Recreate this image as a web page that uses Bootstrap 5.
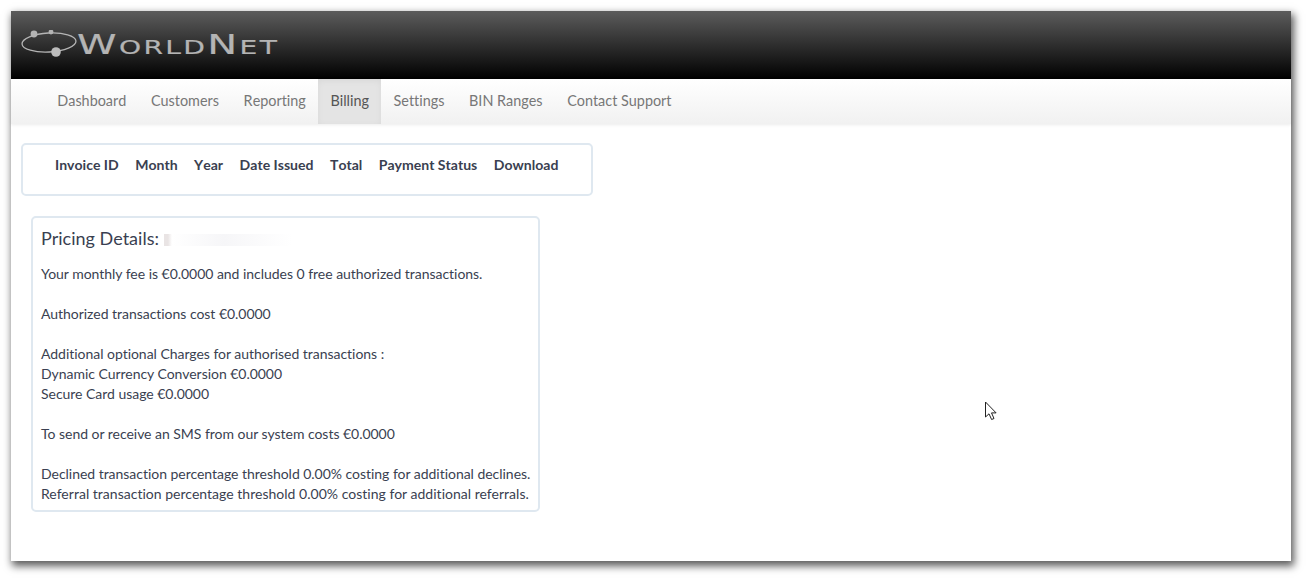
<!DOCTYPE html>
<html lang="en">
<head>
<meta charset="utf-8">
<title>WorldNet</title>
<link rel="stylesheet" href="https://cdn.jsdelivr.net/npm/bootstrap@5.3.0/dist/css/bootstrap.min.css">
<style>
html,body{height:580px;overflow:hidden;background:#fff;}
body{font-family:"Lato","Liberation Sans",sans-serif;font-size:14px;line-height:20px;color:#3a3f51;padding:11px 19px 19px 11px;font-variant-ligatures:none;}
.win{width:1280px;height:550px;background:#fff;box-shadow:2px 4px 8px 1px rgba(0,0,0,.65);position:relative;}
.topbar{height:68px;background:linear-gradient(#5c5c5c,#000);padding-left:10px;}
.wordmark{display:inline-block;font-family:"DejaVu Sans",sans-serif;font-size:27px;line-height:1;color:#b4b4b4;font-variant:small-caps;letter-spacing:1.6px;margin-left:-2px;margin-top:-1px;white-space:nowrap;transform:scaleX(1.48);transform-origin:left center;-webkit-text-stroke:.2px #b4b4b4;}
.menubar{height:45px;background:linear-gradient(#fff,#f1f1f1);padding-left:34px;box-shadow:0 1px 3px rgba(0,0,0,.08);}
.menubar .nav-link{color:#777;padding:12px 12.3px;line-height:20px;height:45px;font-size:14.4px;font-kerning:none;}
.menubar .nav-link.active{background:#e4e4e4;color:#555;box-shadow:inset 0 2px 6px rgba(0,0,0,.05);}
.frame-box{border:2px solid #dfe8f0;border-radius:5px;background:#fff;}
.inv-box{width:572px;height:53px;margin:19px 0 0 10px;padding:10px 0 0 23.5px;}
.inv-table th{padding:0 8px 0 8.5px;font-weight:700;font-size:14.05px;color:#3a3f51;line-height:20px;white-space:nowrap;font-kerning:none;}
.price-box{width:509px;height:296px;margin:20px 0 0 20px;padding:7px 8px 0;letter-spacing:-.03px;}
.price-title{font-size:18px;line-height:26px;font-weight:400;margin:0 0 13px;color:#3a3f51;letter-spacing:.02px;}
.smear{display:inline-block;width:128px;height:12px;vertical-align:-1px;background:linear-gradient(90deg,#e9e4e4 0 4px,#fff 8px,#f6f6f8 60px,#fff 128px);}
.price-box p{margin:0 0 20px;white-space:nowrap;}
.price-box p:last-child{margin:0;}
.wide-line{letter-spacing:.02px;}
.pointer{position:absolute;left:973px;top:390px;}
</style>
</head>
<body>
<div class="win">
  <header class="topbar d-flex align-items-center">
    <svg width="58" height="30" viewBox="0 0 58 30" fill="none" aria-hidden="true">
      <ellipse cx="28" cy="12.5" rx="27" ry="9.5" transform="rotate(-3 28 12.5)" stroke="#b4b4b4" stroke-width="1.3"/>
      <circle cx="13" cy="4" r="3.4" fill="#b4b4b4"/>
      <circle cx="30" cy="2" r="2.4" fill="#b4b4b4"/>
      <circle cx="35" cy="22" r="4.8" fill="#bcbcbc"/>
    </svg>
    <span class="wordmark">WorldNet</span>
  </header>
  <nav class="menubar">
    <ul class="nav">
      <li class="nav-item"><a class="nav-link" href="#">Dashboard</a></li>
      <li class="nav-item"><a class="nav-link" href="#">Customers</a></li>
      <li class="nav-item"><a class="nav-link" href="#">Reporting</a></li>
      <li class="nav-item"><a class="nav-link active" href="#">Billing</a></li>
      <li class="nav-item"><a class="nav-link" href="#">Settings</a></li>
      <li class="nav-item"><a class="nav-link" href="#">BIN Ranges</a></li>
      <li class="nav-item"><a class="nav-link" href="#">Contact Support</a></li>
    </ul>
  </nav>
  <div class="frame-box inv-box">
    <table class="inv-table">
      <thead><tr><th>Invoice ID</th><th>Month</th><th>Year</th><th>Date Issued</th><th>Total</th><th>Payment Status</th><th>Download</th></tr></thead>
    </table>
  </div>
  <section class="frame-box price-box">
    <h2 class="price-title">Pricing Details: <span class="smear"></span></h2>
    <p>Your monthly fee is €0.0000 and includes 0 free authorized transactions.</p>
    <p>Authorized transactions cost €0.0000</p>
    <p>Additional optional Charges for authorised transactions :<br>Dynamic Currency Conversion €0.0000<br>Secure Card usage €0.0000</p>
    <p>To send or receive an SMS from our system costs €0.0000</p>
    <p>Declined transaction percentage threshold 0.00% costing for additional declines.<br><span class="wide-line">Referral transaction percentage threshold 0.00% costing for additional referrals.</span></p>
  </section>
  <svg class="pointer" width="14" height="20" viewBox="0 0 14 20" aria-hidden="true">
    <path d="M1.5 1v15l3.5-3.2 2.6 5.7 2.4-1-2.5-5.6h4.6z" fill="#fff" stroke="#222" stroke-width="1"/>
  </svg>
</div>
</body>
</html>
